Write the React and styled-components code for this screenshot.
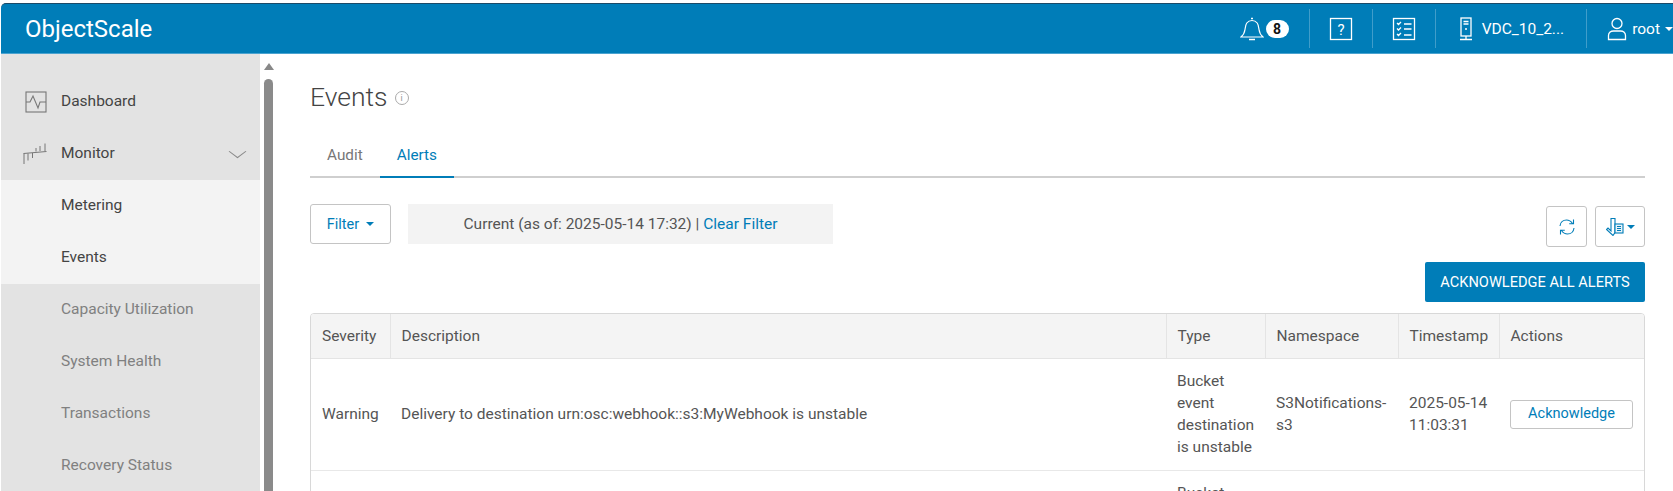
import React from "react";
import styled, { createGlobalStyle } from "styled-components";

const GlobalStyle = createGlobalStyle`
	html, body {
		margin: 0;
		padding: 0;
		background: #fff;
		overflow: hidden;
	}
	body {
		font-family: Roboto, "Liberation Sans", sans-serif;
		font-size: 15.5px;
		color: #555;
	}
`;

const BLUE = "#007db8";

function BellIcon() {
	return (
		<svg width="24" height="24" viewBox="0 0 24 24" fill="none" stroke="#fff" strokeWidth="1.2">
			<path d="M1 20c2.500-2 3.500-4 4-7.500.4-3 .6-5 1.800-6.500C8 4.500 10 3.500 12 3.500s4 1 5.200 2.500c1.200 1.500 1.400 3.500 1.800 6.500.5 3.500 1.500 5.500 4 7.500z" />
			<path d="M9 22.500h6M11 1.500h2" strokeWidth="1.5" />
		</svg>
	);
}

function HelpIcon() {
	return (
		<svg width="24" height="24" viewBox="0 0 24 24" fill="none" stroke="#fff" strokeWidth="1.3">
			<rect x="1.500" y="1.500" width="21" height="21" />
			<text x="12" y="17.500" fontFamily="Roboto, sans-serif" fontSize="15" textAnchor="middle" fill="#fff" stroke="none">?</text>
		</svg>
	);
}

function TasksIcon() {
	return (
		<svg width="24" height="24" viewBox="0 0 24 24" fill="none" stroke="#fff" strokeWidth="1.3">
			<rect x="1.500" y="1.500" width="21" height="21" />
			<path d="M5 6l1.500 1.500L9 5M5 11.500L6.500 13 9 10.500M5 17l1.500 1.500L9 16M12 7h7.500M12 12h7.500M12 18h7.500" />
		</svg>
	);
}

function ServerIcon() {
	return (
		<svg width="16" height="24" viewBox="0 0 16 24" fill="none" stroke="#fff" strokeWidth="1.3">
			<rect x="3" y="1" width="10" height="18" />
			<path d="M5.500 4.500h5M5.500 7h5M8 19v3M2 22.500h12" />
			<circle cx="8" cy="12" r="1" fill="#fff" stroke="none" />
		</svg>
	);
}

function UserIcon() {
	return (
		<svg width="20" height="24" viewBox="0 0 20 24" fill="none" stroke="#fff" strokeWidth="1.3">
			<circle cx="10" cy="6.500" r="5" />
			<path d="M1.500 22.500v-4c0-3 2.500-4.500 5-4.500h7c2.500 0 5 1.500 5 4.500v4z" />
		</svg>
	);
}

function PulseIcon() {
	return (
		<svg width="22" height="22" viewBox="0 0 22 22" fill="none" stroke="#777" strokeWidth="1.1">
			<rect x="1" y="1" width="20" height="20" />
			<path d="M1 11h4l3-6 5 12 2-6h6" />
		</svg>
	);
}

function BarsIcon() {
	return (
		<svg width="24" height="22" viewBox="0 0 24 22" fill="none" stroke="#777" strokeWidth="1">
			<path d="M0.500 10.500L23.500 8.500M1 10.500V21M5 10.500v7M9.500 10v5M13 8.500V5M17 8V3M22 8V0.500" />
		</svg>
	);
}

function RefreshIcon() {
	return (
		<svg width="16" height="18" viewBox="0 0 16 18" fill="none" stroke={BLUE} strokeWidth="1.1">
			<path d="M1 8c.3-3.500 3-6 6.500-6 2.500 0 4.500 1.300 6 3.500M14.500 1.500v4.300h-4.300" />
			<path d="M15 10c-.3 3.500-3 6-6.500 6-2.500 0-4.500-1.300-6-3.500M1.500 16.500v-4.300h4.300" />
		</svg>
	);
}

function ExportIcon() {
	return (
		<svg width="18" height="18" viewBox="0 0 18 18" fill="none" stroke={BLUE} strokeWidth="1.1">
			<path d="M5 0.500h4v14l-2 3L0.500 11.500 2 10l3 3z" />
			<rect x="9" y="6" width="8" height="9" fill="#e8f3f9" />
			<path d="M11 8.500h4M11 10.500h4M11 12.500h4" />
		</svg>
	);
}

const Page = styled.div`
	height: 491px;
	overflow: hidden;
	display: flex;
	flex-direction: column;
`;
const Header = styled.header`
	height: 49px;
	flex: none;
	display: flex;
	align-items: center;
	justify-content: space-between;
	margin: 3px 0 0 1px;
	background: ${BLUE};
	border-top: 1px solid #1a4a68;
	border-bottom: 1px solid #4aa3d0;
	border-top-left-radius: 5px;
`;
const Brand = styled.div`
	margin-left: 24px;
	font-size: 24px;
	color: #fff;
`;
const HeaderTools = styled.div`
	display: flex;
	align-items: center;
	height: 39px;
`;
const HeaderItem = styled.div`
	display: flex;
	align-items: center;
	gap: ${(p) => p.$gap || 0}px;
	height: 39px;
	padding: ${(p) => p.$padding};
	color: #fff;
	font-size: 15.5px;
	& + & {
		border-left: 1px solid rgba(255, 255, 255, 0.25);
	}
`;
const Badge = styled.span`
	display: flex;
	align-items: center;
	justify-content: center;
	width: 23px;
	height: 18px;
	border-radius: 9px;
	background: #fff;
	color: #111;
	font-size: 14px;
	font-weight: 700;
`;
const Caret = styled.span`
	display: inline-block;
	border-left: 4px solid transparent;
	border-right: 4px solid transparent;
	border-top: 4px solid ${(p) => p.$color || "#fff"};
	margin-left: ${(p) => p.$gap || 0}px;
`;
const Body = styled.div`
	flex: 1;
	display: flex;
	min-height: 0;
`;
const Sidebar = styled.nav`
	width: 259px;
	flex: none;
	margin-left: 1px;
	padding-top: 22px;
	background: #e3e3e3;
`;
const NavRow = styled.div`
	position: relative;
	box-sizing: border-box;
	height: 52px;
	display: flex;
	align-items: center;
	padding: 0 0 2px 60px;
	font-size: 15.5px;
	background: ${(p) => (p.$open ? "#f3f3f3" : "transparent")};
	color: ${(p) => (p.$muted ? "#808080" : "#444")};
`;
const NavIcon = styled.span`
	position: absolute;
	left: ${(p) => p.$left}px;
	top: 15px;
	display: flex;
`;
const Chevron = styled.span`
	position: absolute;
	right: 17px;
	top: 18px;
	width: 10px;
	height: 10px;
	border-right: 1px solid #888;
	border-bottom: 1px solid #888;
	transform: rotate(45deg) skew(-8deg, -8deg);
`;
const ScrollGutter = styled.div`
	width: 9px;
	flex: none;
	margin-left: 4px;
	display: flex;
	flex-direction: column;
	align-items: center;
	padding-top: 9px;
`;
const ScrollArrow = styled.span`
	border-left: 5px solid transparent;
	border-right: 5px solid transparent;
	border-bottom: 7px solid #888;
`;
const ScrollThumb = styled.span`
	width: 9px;
	flex: 1;
	margin-top: 9px;
	background: #8a8a8a;
	border-radius: 5px 5px 0 0;
`;
const Main = styled.main`
	flex: 1;
	min-width: 0;
	padding: 0 28px 0 37px;
`;
const TitleRow = styled.div`
	display: flex;
	align-items: center;
	gap: 7px;
	height: 36px;
	margin-top: 24px;
`;
const Title = styled.h1`
	margin: 0;
	font-size: 26.5px;
	font-weight: 300;
	color: #444;
`;
const InfoDot = styled.span`
	display: flex;
	align-items: center;
	justify-content: center;
	width: 12px;
	height: 12px;
	margin-top: 4px;
	border: 1px solid #aaa;
	border-radius: 50%;
	color: #999;
	font-size: 9px;
`;
const Tabs = styled.div`
	display: flex;
	height: 36px;
	margin-top: 26px;
	border-bottom: 2px solid #cfcfcf;
`;
const Tab = styled.div`
	padding: 0 17px;
	height: 36px;
	font-size: 15.3px;
	line-height: 30px;
	color: ${(p) => (p.$active ? BLUE : "#777")};
	border-bottom: 2px solid ${(p) => (p.$active ? BLUE : "transparent")};
`;
const Toolbar = styled.div`
	display: flex;
	justify-content: space-between;
	margin-top: 26px;
	height: 43px;
`;
const FilterGroup = styled.div`
	display: flex;
	gap: 17px;
	height: 40px;
`;
const OutlineButton = styled.button`
	display: flex;
	align-items: center;
	justify-content: center;
	box-sizing: border-box;
	width: ${(p) => p.$width}px;
	height: ${(p) => p.$height || 41}px;
	padding: 0;
	background: #fff;
	border: 1px solid #c4c4c4;
	border-radius: 3px;
	font: inherit;
	font-size: 14.5px;
	color: ${BLUE};
`;
const FilterBand = styled.div`
	display: flex;
	align-items: center;
	justify-content: center;
	width: 425px;
	background: #f3f3f3;
	font-size: 15.5px;
	color: #555;
`;
const BandLink = styled.span`
	color: ${BLUE};
`;
const ActionGroup = styled.div`
	display: flex;
	gap: 8px;
	padding-top: 2px;
`;
const AckRow = styled.div`
	display: flex;
	justify-content: flex-end;
	margin-top: 15px;
`;
const PrimaryButton = styled.button`
	width: 220px;
	height: 40px;
	background: ${BLUE};
	border: none;
	border-radius: 2px;
	color: #fff;
	font: inherit;
	font-size: 14.6px;
	font-weight: 400;
`;
const TableWrap = styled.div`
	margin-top: 11px;
	border: 1px solid #d8d8d8;
	border-radius: 4px 4px 0 0;
	overflow: hidden;
`;
const Table = styled.table`
	width: 100%;
	table-layout: fixed;
	border-collapse: collapse;
`;
const Th = styled.th`
	height: 44px;
	box-sizing: border-box;
	padding: 0 11px;
	background: #f4f4f4;
	border-bottom: 1px solid #e4e4e4;
	font-size: 15.5px;
	font-weight: 400;
	text-align: left;
	color: #555;
	& + & {
		border-left: 1px solid #e4e4e4;
	}
`;
const Td = styled.td`
	padding: 11px;
	border-bottom: 1px solid #e8e8e8;
	font-size: 15.5px;
	line-height: 22.3px;
	color: #555;
	vertical-align: ${(p) => p.$align || "middle"};
`;
const RowButton = styled(OutlineButton)`
	width: 100%;
`;

const COLUMNS = [
	{ label: "Severity", width: 79 },
	{ label: "Description", width: 776 },
	{ label: "Type", width: 99 },
	{ label: "Namespace", width: 133 },
	{ label: "Timestamp", width: 101 },
	{ label: "Actions", width: 145 },
];
const SUB_ITEMS = ["Metering", "Events"];
const MUTED_ITEMS = ["Capacity Utilization", "System Health", "Transactions", "Recovery Status"];

export default function App() {
	return (
		<Page>
			<GlobalStyle />
			<Header>
				<Brand>ObjectScale</Brand>
				<HeaderTools>
					<HeaderItem $gap={2} $padding="0 20px 0 40px">
						<BellIcon />
						<Badge>8</Badge>
					</HeaderItem>
					<HeaderItem $padding="0 19px">
						<HelpIcon />
					</HeaderItem>
					<HeaderItem $padding="0 19px">
						<TasksIcon />
					</HeaderItem>
					<HeaderItem $gap={8} $padding="0 22px">
						<ServerIcon />
						VDC_10_2...
					</HeaderItem>
					<HeaderItem $gap={5} $padding="0 0 0 20px">
						<UserIcon />
						root
						<Caret />
					</HeaderItem>
				</HeaderTools>
			</Header>
			<Body>
				<Sidebar>
					<NavRow>
						<NavIcon $left={24}><PulseIcon /></NavIcon>
						Dashboard
					</NavRow>
					<NavRow>
						<NavIcon $left={22}><BarsIcon /></NavIcon>
						Monitor
						<Chevron />
					</NavRow>
					{SUB_ITEMS.map((label) => (
						<NavRow $open key={label}>{label}</NavRow>
					))}
					{MUTED_ITEMS.map((label) => (
						<NavRow $muted key={label}>{label}</NavRow>
					))}
				</Sidebar>
				<ScrollGutter>
					<ScrollArrow />
					<ScrollThumb />
				</ScrollGutter>
				<Main>
					<TitleRow>
						<Title>Events</Title>
						<InfoDot>i</InfoDot>
					</TitleRow>
					<Tabs>
						<Tab>Audit</Tab>
						<Tab $active>Alerts</Tab>
					</Tabs>
					<Toolbar>
						<FilterGroup>
							<OutlineButton $width={81} $height={40}>
								Filter
								<Caret $color={BLUE} $gap={7} />
							</OutlineButton>
							<FilterBand>
								Current (as of: 2025-05-14 17:32) |&nbsp;<BandLink>Clear Filter</BandLink>
							</FilterBand>
						</FilterGroup>
						<ActionGroup>
							<OutlineButton $width={41}><RefreshIcon /></OutlineButton>
							<OutlineButton $width={50}>
								<ExportIcon />
								<Caret $color={BLUE} $gap={3} />
							</OutlineButton>
						</ActionGroup>
					</Toolbar>
					<AckRow>
						<PrimaryButton>ACKNOWLEDGE ALL ALERTS</PrimaryButton>
					</AckRow>
					<TableWrap>
						<Table>
							<colgroup>
								{COLUMNS.map((col) => (
									<col key={col.label} width={col.width} />
								))}
							</colgroup>
							<thead>
								<tr>
									{COLUMNS.map((col) => (
										<Th key={col.label}>{col.label}</Th>
									))}
								</tr>
							</thead>
							<tbody>
								<tr>
									<Td>Warning</Td>
									<Td>Delivery to destination urn:osc:webhook::s3:MyWebhook is unstable</Td>
									<Td>Bucket event destination is unstable</Td>
									<Td>S3Notifications-s3</Td>
									<Td>2025-05-14 11:03:31</Td>
									<Td><RowButton $height={29}>Acknowledge</RowButton></Td>
								</tr>
								<tr>
									<Td />
									<Td />
									<Td $align="top">Bucket</Td>
									<Td />
									<Td />
									<Td />
								</tr>
							</tbody>
						</Table>
					</TableWrap>
				</Main>
			</Body>
		</Page>
	);
}
